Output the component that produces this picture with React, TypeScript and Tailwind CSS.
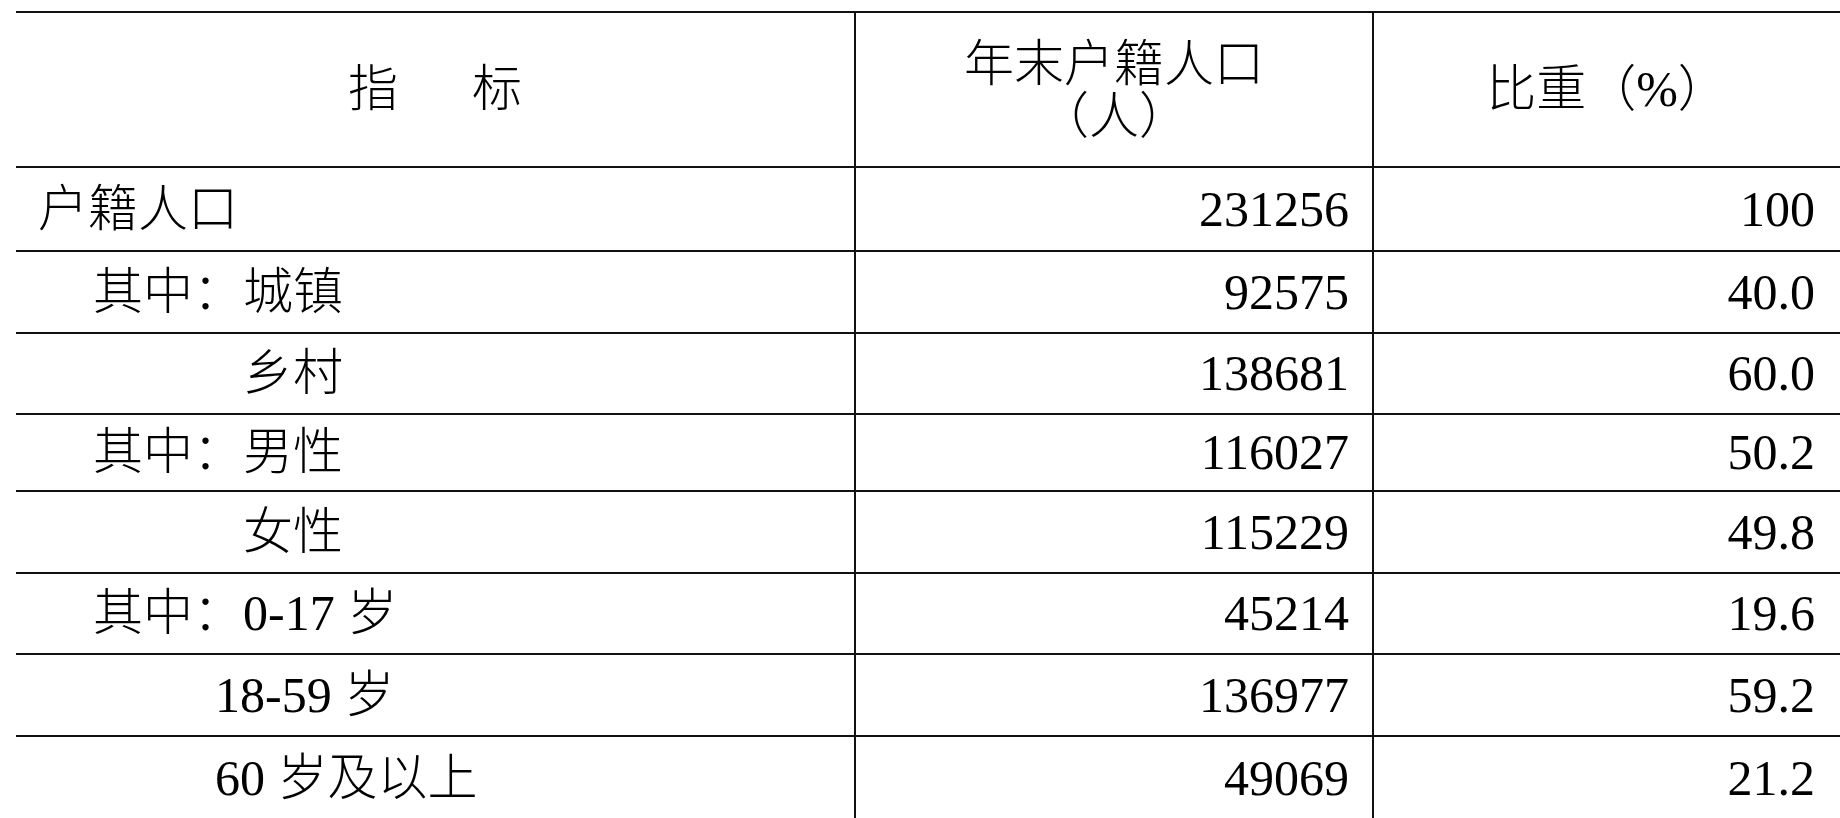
import React from 'react';

type Row = {
  label: string;
  indent: string;
  count: string;
  share: string;
  height: string;
};

const rows: Row[] = [
  { label: '户籍人口', indent: 'pl-[22px]', count: '231256', share: '100', height: 'h-[84px]' },
  { label: '其中：城镇', indent: 'pl-[77px]', count: '92575', share: '40.0', height: 'h-[82px]' },
  { label: '乡村', indent: 'pl-[227px]', count: '138681', share: '60.0', height: 'h-[81px]' },
  { label: '其中：男性', indent: 'pl-[77px]', count: '116027', share: '50.2', height: 'h-[77px]' },
  { label: '女性', indent: 'pl-[227px]', count: '115229', share: '49.8', height: 'h-[82px]' },
  { label: '其中：0-17 岁', indent: 'pl-[77px]', count: '45214', share: '19.6', height: 'h-[81px]' },
  { label: '18-59 岁', indent: 'pl-[199px]', count: '136977', share: '59.2', height: 'h-[82px]' },
  { label: '60 岁及以上', indent: 'pl-[199px]', count: '49069', share: '21.2', height: 'h-[84px]' },
];

export default function App() {
  return (
    <div className="min-h-[818px] w-[1840px] overflow-hidden bg-white pt-[11px] pl-[16px] font-['Liberation_Serif','Noto_Sans_CJK_SC',serif] text-[50px] font-light text-black">
      {/* 表头 */}
      <div className="flex h-[155px] border-t-2 border-[#111]">
        <div className="flex w-[838px] items-center justify-center gap-[74px]">
          <span>指</span>
          <span>标</span>
        </div>
        <div className="flex w-[518px] flex-col items-center justify-center border-l-2 border-[#111] leading-[52px]">
          <span>年末户籍人口</span>
          <span>（人）</span>
        </div>
        <div className="flex flex-1 items-center justify-center border-l-2 border-[#111]">
          <span>比重（%）</span>
        </div>
      </div>

      {rows.map((row) => (
        <div key={row.label} className={`flex border-t-2 border-[#111] ${row.height}`}>
          <div className={`flex w-[838px] items-center whitespace-pre ${row.indent}`}>
            {row.label}
          </div>
          <div className="flex w-[518px] items-center justify-end border-l-2 border-[#111] pr-[23px]">
            {row.count}
          </div>
          <div className="flex flex-1 items-center justify-end border-l-2 border-[#111] pr-[25px]">
            {row.share}
          </div>
        </div>
      ))}
    </div>
  );
}
